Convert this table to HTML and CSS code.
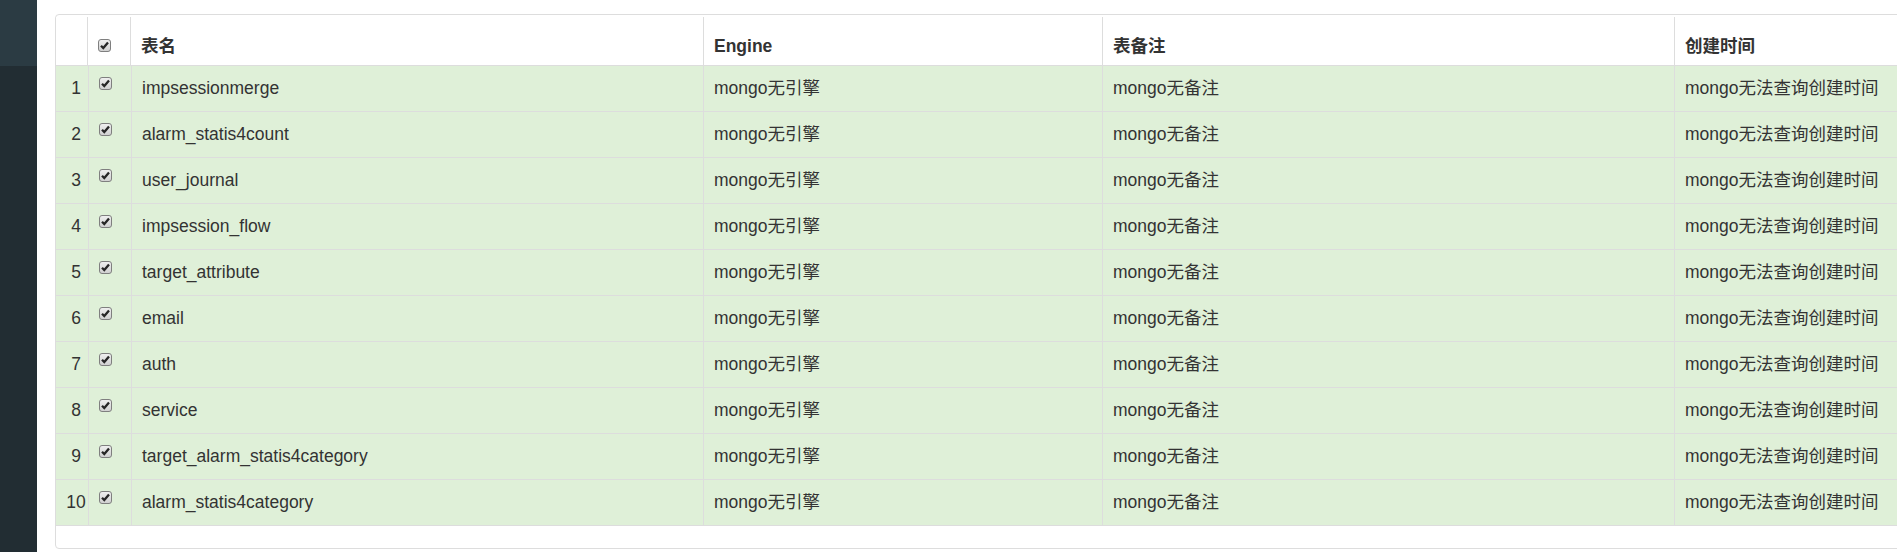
FILE: index.html
```html
<!DOCTYPE html>
<html lang="zh-CN">
<head>
<meta charset="utf-8">
<title>表列表</title>
<link rel="stylesheet" href="styles.css">
</head>
<body>
<div class="layout">
  <aside class="sidebar">
    <div class="sidebar-top"></div>
  </aside>
  <main class="main">
    <div class="panel">
      <div class="grid-table">
        <div class="row head">
          <div class="cell num"></div>
          <div class="cell chk"><span class="cb"><svg viewBox="0 0 13 13" width="13" height="13"><defs><linearGradient id="g0" x1="0" y1="0" x2="0" y2="1"><stop offset="0" stop-color="#f0f0f0"/><stop offset="1" stop-color="#cfcfcf"/></linearGradient></defs><rect x="0.5" y="0.5" width="12" height="12" rx="2.5" fill="url(#g0)" stroke="#7f7f7f"/><path d="M3 6.7 L5.3 9 L10 3.6" fill="none" stroke="#262626" stroke-width="2.3"/></svg></span></div>
          <div class="cell">表名</div>
          <div class="cell">Engine</div>
          <div class="cell">表备注</div>
          <div class="cell">创建时间</div>
        </div>
        <div class="row"><div class="cell num">1</div><div class="cell chk"><span class="cb"><svg viewBox="0 0 13 13" width="13" height="13"><rect x="0.5" y="0.5" width="12" height="12" rx="2.5" fill="url(#g0)" stroke="#7f7f7f"/><path d="M3 6.7 L5.3 9 L10 3.6" fill="none" stroke="#262626" stroke-width="2.3"/></svg></span></div><div class="cell">impsessionmerge</div><div class="cell">mongo无引擎</div><div class="cell">mongo无备注</div><div class="cell">mongo无法查询创建时间</div></div>
        <div class="row"><div class="cell num">2</div><div class="cell chk"><span class="cb"><svg viewBox="0 0 13 13" width="13" height="13"><rect x="0.5" y="0.5" width="12" height="12" rx="2.5" fill="url(#g0)" stroke="#7f7f7f"/><path d="M3 6.7 L5.3 9 L10 3.6" fill="none" stroke="#262626" stroke-width="2.3"/></svg></span></div><div class="cell">alarm_statis4count</div><div class="cell">mongo无引擎</div><div class="cell">mongo无备注</div><div class="cell">mongo无法查询创建时间</div></div>
        <div class="row"><div class="cell num">3</div><div class="cell chk"><span class="cb"><svg viewBox="0 0 13 13" width="13" height="13"><rect x="0.5" y="0.5" width="12" height="12" rx="2.5" fill="url(#g0)" stroke="#7f7f7f"/><path d="M3 6.7 L5.3 9 L10 3.6" fill="none" stroke="#262626" stroke-width="2.3"/></svg></span></div><div class="cell">user_journal</div><div class="cell">mongo无引擎</div><div class="cell">mongo无备注</div><div class="cell">mongo无法查询创建时间</div></div>
        <div class="row"><div class="cell num">4</div><div class="cell chk"><span class="cb"><svg viewBox="0 0 13 13" width="13" height="13"><rect x="0.5" y="0.5" width="12" height="12" rx="2.5" fill="url(#g0)" stroke="#7f7f7f"/><path d="M3 6.7 L5.3 9 L10 3.6" fill="none" stroke="#262626" stroke-width="2.3"/></svg></span></div><div class="cell">impsession_flow</div><div class="cell">mongo无引擎</div><div class="cell">mongo无备注</div><div class="cell">mongo无法查询创建时间</div></div>
        <div class="row"><div class="cell num">5</div><div class="cell chk"><span class="cb"><svg viewBox="0 0 13 13" width="13" height="13"><rect x="0.5" y="0.5" width="12" height="12" rx="2.5" fill="url(#g0)" stroke="#7f7f7f"/><path d="M3 6.7 L5.3 9 L10 3.6" fill="none" stroke="#262626" stroke-width="2.3"/></svg></span></div><div class="cell">target_attribute</div><div class="cell">mongo无引擎</div><div class="cell">mongo无备注</div><div class="cell">mongo无法查询创建时间</div></div>
        <div class="row"><div class="cell num">6</div><div class="cell chk"><span class="cb"><svg viewBox="0 0 13 13" width="13" height="13"><rect x="0.5" y="0.5" width="12" height="12" rx="2.5" fill="url(#g0)" stroke="#7f7f7f"/><path d="M3 6.7 L5.3 9 L10 3.6" fill="none" stroke="#262626" stroke-width="2.3"/></svg></span></div><div class="cell">email</div><div class="cell">mongo无引擎</div><div class="cell">mongo无备注</div><div class="cell">mongo无法查询创建时间</div></div>
        <div class="row"><div class="cell num">7</div><div class="cell chk"><span class="cb"><svg viewBox="0 0 13 13" width="13" height="13"><rect x="0.5" y="0.5" width="12" height="12" rx="2.5" fill="url(#g0)" stroke="#7f7f7f"/><path d="M3 6.7 L5.3 9 L10 3.6" fill="none" stroke="#262626" stroke-width="2.3"/></svg></span></div><div class="cell">auth</div><div class="cell">mongo无引擎</div><div class="cell">mongo无备注</div><div class="cell">mongo无法查询创建时间</div></div>
        <div class="row"><div class="cell num">8</div><div class="cell chk"><span class="cb"><svg viewBox="0 0 13 13" width="13" height="13"><rect x="0.5" y="0.5" width="12" height="12" rx="2.5" fill="url(#g0)" stroke="#7f7f7f"/><path d="M3 6.7 L5.3 9 L10 3.6" fill="none" stroke="#262626" stroke-width="2.3"/></svg></span></div><div class="cell">service</div><div class="cell">mongo无引擎</div><div class="cell">mongo无备注</div><div class="cell">mongo无法查询创建时间</div></div>
        <div class="row"><div class="cell num">9</div><div class="cell chk"><span class="cb"><svg viewBox="0 0 13 13" width="13" height="13"><rect x="0.5" y="0.5" width="12" height="12" rx="2.5" fill="url(#g0)" stroke="#7f7f7f"/><path d="M3 6.7 L5.3 9 L10 3.6" fill="none" stroke="#262626" stroke-width="2.3"/></svg></span></div><div class="cell">target_alarm_statis4category</div><div class="cell">mongo无引擎</div><div class="cell">mongo无备注</div><div class="cell">mongo无法查询创建时间</div></div>
        <div class="row"><div class="cell num">10</div><div class="cell chk"><span class="cb"><svg viewBox="0 0 13 13" width="13" height="13"><rect x="0.5" y="0.5" width="12" height="12" rx="2.5" fill="url(#g0)" stroke="#7f7f7f"/><path d="M3 6.7 L5.3 9 L10 3.6" fill="none" stroke="#262626" stroke-width="2.3"/></svg></span></div><div class="cell">alarm_statis4category</div><div class="cell">mongo无引擎</div><div class="cell">mongo无备注</div><div class="cell">mongo无法查询创建时间</div></div>
      </div>
      <div class="panel-footer"></div>
    </div>
  </main>
</div>
</body>
</html>
```

FILE: styles.css
```css
html, body {
  margin: 0;
  padding: 0;
  height: 100%;
  overflow: hidden;
  background: #fff;
}

body {
  font-family: "Liberation Sans", Arial, "Noto Sans CJK SC", sans-serif;
  font-size: 17.5px;
  line-height: 25px;
  color: #333;
}

.layout {
  display: flex;
  height: 552px;
}

.sidebar {
  width: 37px;
  flex: 0 0 37px;
  background: #222d33;
}

.sidebar-top {
  height: 66px;
  background: #2b3b43;
}

.main {
  flex: 1;
  min-width: 0;
  overflow: hidden;
  padding: 14px 0 0 18px;
}

.panel {
  width: 2192px;
  border: 1px solid #ddd;
  border-radius: 4px;
  padding-top: 2px;
  background: #fff;
}

.row {
  display: grid;
  grid-template-columns: 33px 43px 572px 399px 572px 572px;
  height: 46px;
  background: #dff0d8;
}

.row.head {
  grid-template-columns: 32px 43px 573px 399px 572px 572px;
  height: 49px;
  background: #fff;
  font-weight: bold;
}

.cell {
  box-sizing: border-box;
  border-right: 1px solid #ddd;
  border-bottom: 1px solid #ddd;
  padding: 0 10px;
  display: flex;
  align-items: center;
  white-space: nowrap;
}

.head .cell {
  align-items: flex-end;
  padding-bottom: 6px;
}

.cell.num {
  justify-content: center;
  padding: 0 0 0 8px;
}

.cell.chk {
  align-items: flex-start;
  padding-top: 11px;
}

.head .cell.chk {
  align-items: flex-start;
  padding-top: 22px;
  padding-bottom: 0;
}

.cb {
  display: block;
  width: 13px;
  height: 13px;
}

.cb svg {
  display: block;
}

.panel-footer {
  height: 22px;
}
```
